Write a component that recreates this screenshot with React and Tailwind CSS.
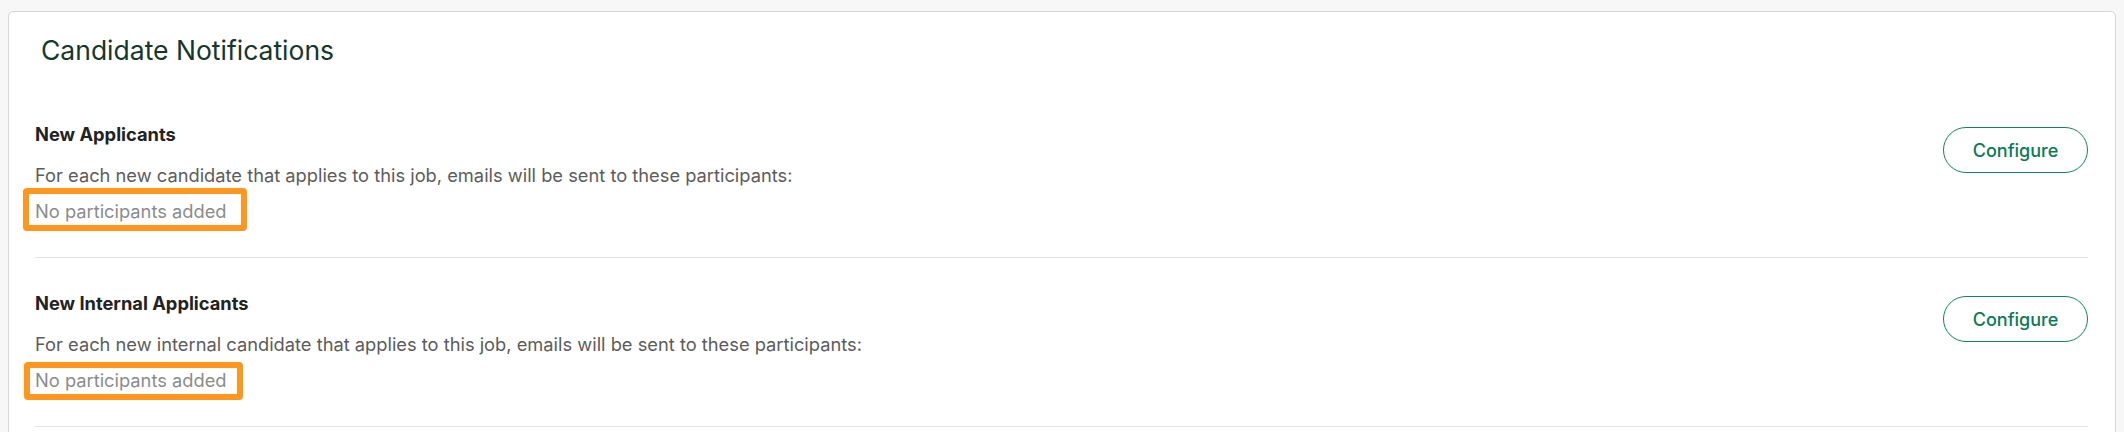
const rows = [
  {
    title: "New Applicants",
    text: "For each new candidate that applies to this job, emails will be sent to these participants:",
    mark: "left-[-12px] top-[-9px] h-[43px] w-[224px]",
  },
  {
    title: "New Internal Applicants",
    text: "For each new internal candidate that applies to this job, emails will be sent to these participants:",
    mark: "left-[-11px] top-[-4px] h-[38px] w-[219px]",
  },
];

function NotificationRow({ title, text, mark }) {
  return (
    <div className="flex items-start justify-between border-b border-[#e3e3e3] pt-[33px] pb-[32px]">
      <div>
        <h3 className="text-[18.3px] leading-[24px] font-bold text-[#222222]">{title}</h3>
        <p className="mt-[15px] text-[18.3px] leading-[28px] text-[#5c5c5c]">{text}</p>
        <div className="mt-[8px]">
          <span className="relative inline-block text-[18.3px] leading-[28px] text-[#8c8c8c]">
            No participants added
            {/* highlight annotation */}
            <span className={`pointer-events-none absolute rounded-[4px] border-[6px] border-[#ff961f] ${mark}`} />
          </span>
        </div>
      </div>
      <button className="mt-[5px] h-[46px] w-[145px] rounded-full border border-[#12845e] text-[18px] font-medium text-[#0b7a55] hover:bg-[#f0f8f4]">
        Configure
      </button>
    </div>
  );
}

export default function App() {
  return (
    <div
      className="min-h-[432px] bg-[#f7f7f7] px-[8px] pt-[11px] overflow-hidden"
      style={{ fontFamily: "Inter, 'Noto Sans', sans-serif" }}
    >
      <div className="h-[460px] rounded-[5px] border border-[#d6d6d6] bg-white">
        <h2 className="pl-[32px] pt-[20px] text-[26.5px] leading-[36px] font-normal text-[#15372c]">
          Candidate Notifications
        </h2>
        <div className="mt-[21px] pl-[26px] pr-[27px]">
          {rows.map((row) => (
            <NotificationRow key={row.title} {...row} />
          ))}
        </div>
      </div>
    </div>
  );
}
